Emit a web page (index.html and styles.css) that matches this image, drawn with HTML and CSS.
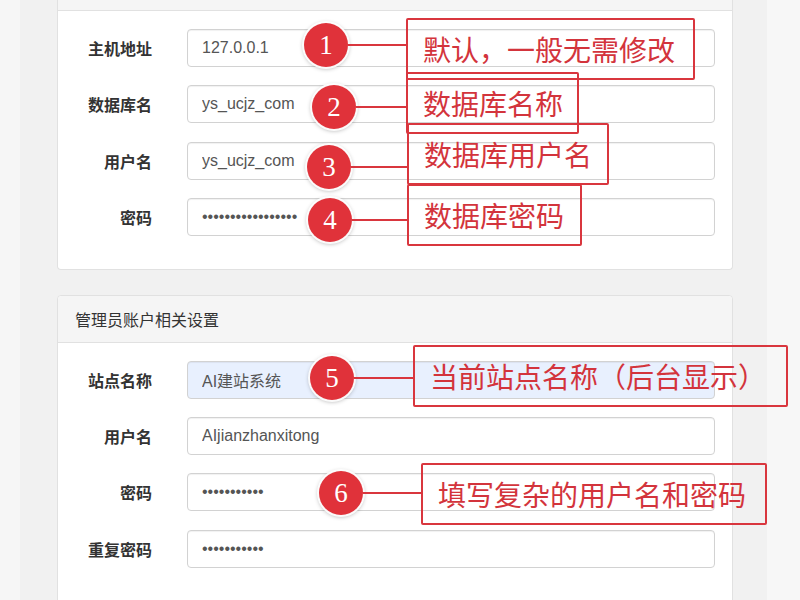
FILE: index.html
```html
<!DOCTYPE html>
<html lang="zh-CN">
<head>
<meta charset="utf-8">
<title>安装设置</title>
<link rel="stylesheet" href="styles.css">
</head>
<body>
<div class="main">
  <section class="panel panel-first">
    <div class="panel-heading panel-heading-cut"></div>
    <div class="panel-body form">
      <div class="row"><label class="label">主机地址</label><input class="input" type="text" value="127.0.0.1"></div>
      <div class="row"><label class="label">数据库名</label><input class="input" type="text" value="ys_ucjz_com"></div>
      <div class="row"><label class="label">用户名</label><input class="input" type="text" value="ys_ucjz_com"></div>
      <div class="row"><label class="label">密码</label><input class="input" type="password" value="12345678901234567"></div>
    </div>
  </section>
  <section class="panel panel-second">
    <div class="panel-heading">管理员账户相关设置</div>
    <div class="panel-body form">
      <div class="row"><label class="label">站点名称</label><input class="input autofill" type="text" value="AI建站系统"></div>
      <div class="row"><label class="label">用户名</label><input class="input" type="text" value="AIjianzhanxitong"></div>
      <div class="row"><label class="label">密码</label><input class="input" type="password" value="12345678901"></div>
      <div class="row"><label class="label">重复密码</label><input class="input" type="password" value="12345678901"></div>
    </div>
  </section>
</div>

<div class="notes">
  <div class="dot d1">1</div><div class="line l1"></div><div class="note n1">默认，一般无需修改</div>
  <div class="dot d2">2</div><div class="line l2"></div><div class="note n2">数据库名称</div>
  <div class="dot d3">3</div><div class="line l3"></div><div class="note n3">数据库用户名</div>
  <div class="dot d4">4</div><div class="line l4"></div><div class="note n4">数据库密码</div>
  <div class="dot d5">5</div><div class="line l5"></div><div class="note n5">当前站点名称（后台显示）</div>
  <div class="dot d6">6</div><div class="line l6"></div><div class="note n6">填写复杂的用户名和密码</div>
</div>
</body>
</html>
```
FILE: styles.css
```css
html, body {
  margin: 0;
  padding: 0;
}
body {
  position: relative;
  height: 600px;
  overflow: hidden;
  background: linear-gradient(to right, #f6f6f6 0, #f6f6f6 20px, #f1f1f1 20px, #f1f1f1 767px, #f7f7f7 767px);
  font-family: "Liberation Sans", "Noto Sans CJK SC", sans-serif;
  color: #333;
}
.main {
  margin-left: 57px;
  width: 676px;
}
.panel {
  background: #fff;
  border: 1px solid #e1e1e1;
  border-radius: 4px;
  margin-bottom: 25px;
}
.panel-first {
  border-top-width: 0;
  border-radius: 0 0 4px 4px;
}
.panel-heading {
  height: 46px;
  display: flex;
  align-items: center;
  padding-left: 17px;
  background: #f5f5f5;
  border-bottom: 1px solid #e1e1e1;
  border-radius: 4px 4px 0 0;
  font-size: 16px;
  color: #333;
}
.panel-heading-cut {
  height: 10px;
  border-radius: 0;
}
.panel-body {
  padding: 18px 17px 33px 0;
}
.panel-second .panel-body {
  padding-bottom: 40px;
}
.form {
  display: flex;
  flex-direction: column;
  gap: 18.3px;
}
.row {
  display: grid;
  grid-template-columns: 94px 1fr;
  column-gap: 35px;
  align-items: center;
}
.label {
  text-align: right;
  font-weight: bold;
  font-size: 16px;
  color: #333;
}
.input {
  height: 38px;
  box-sizing: border-box;
  border: 1px solid #d2d2d2;
  border-radius: 4px;
  padding: 0 14px;
  font-family: "Liberation Sans", "Noto Sans CJK SC", sans-serif;
  font-size: 16px;
  color: #555;
  background: #fff;
  box-shadow: inset 0 1px 1px rgba(0, 0, 0, 0.06);
  outline: none;
}
.autofill {
  background: #e8f0fe;
}

/* annotations */
.notes {
  position: absolute;
  left: 0;
  top: 0;
  width: 800px;
  height: 600px;
  pointer-events: none;
}
.dot {
  position: absolute;
  width: 44px;
  height: 44px;
  border-radius: 50%;
  background: #e0323a;
  color: #fff;
  font-family: "Liberation Serif", "DejaVu Serif", serif;
  font-size: 27px;
  line-height: 44px;
  text-align: center;
  box-shadow: 0 0 0 2px rgba(255, 255, 255, 0.9), 0 1px 4px 1px rgba(0, 0, 0, 0.3);
}
.d1 { left: 304px; top: 23px; }
.d2 { left: 312px; top: 85px; }
.d3 { left: 307px; top: 145px; }
.d4 { left: 308px; top: 198px; }
.d5 { left: 310px; top: 356px; }
.d6 { left: 319px; top: 471px; }

.line {
  position: absolute;
  height: 2px;
  background: #d9363e;
}
.l1 { left: 348px; top: 44px; width: 58px; }
.l2 { left: 356px; top: 106px; width: 50px; }
.l3 { left: 351px; top: 166px; width: 56px; }
.l4 { left: 352px; top: 219px; width: 55px; }
.l5 { left: 354px; top: 377px; width: 59px; }
.l6 { left: 363px; top: 492px; width: 58px; }

.note {
  position: absolute;
  height: 62px;
  box-sizing: border-box;
  border: 2px solid #d9363e;
  border-radius: 2px;
  padding: 0 15px;
  display: flex;
  align-items: center;
  font-family: "Noto Sans CJK SC", sans-serif;
  font-size: 28px;
  color: #d3343c;
  white-space: nowrap;
}
.n1 { left: 406px; top: 18px; width: 289px; }
.n2 { left: 406px; top: 72px; width: 173px; }
.n3 { left: 407px; top: 123px; width: 202px; }
.n4 { left: 407px; top: 184px; width: 175px; }
.n5 { left: 413px; top: 345px; width: 375px; }
.n6 { left: 421px; top: 463px; width: 346px; }
```
